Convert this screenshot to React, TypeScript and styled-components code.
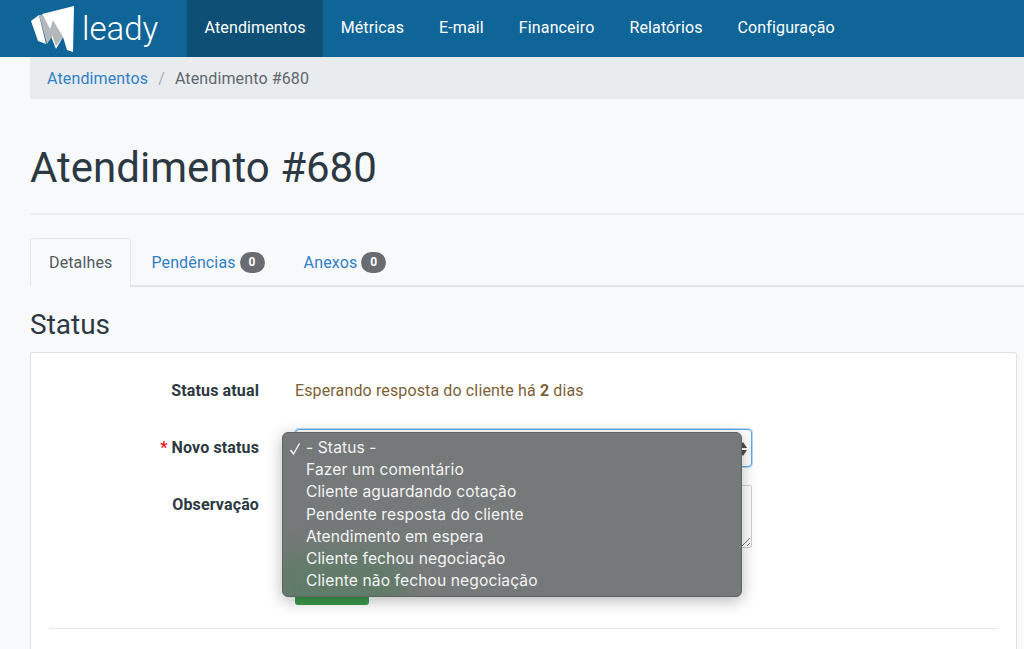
import React from 'react';
import styled, { createGlobalStyle } from 'styled-components';

const GlobalStyle = createGlobalStyle`
  html, body {
    margin: 0;
    padding: 0;
    height: 649px;
    overflow: hidden;
    background: #f8f9fb;
    font-family: Roboto, "Liberation Sans", sans-serif;
    font-size: 16px;
    letter-spacing: 0.13px;
    color: #2d3942;
  }
  * { box-sizing: border-box; }
`;

const NavBar = styled.nav`
  display: flex;
  align-items: stretch;
  height: 57px;
  padding-left: 30px;
  background: #0f6597;
`;

const Brand = styled.div`
  display: flex;
  align-items: center;
  width: 157px;
  gap: 6px;
  color: #fff;
  font-size: 33px;
  font-weight: 300;
  letter-spacing: 0;
`;

const NavItem = styled.a<{ $active?: boolean }>`
  display: flex;
  align-items: center;
  padding: 0 17.5px 2px;
  color: #fff;
  font-size: 16px;
  background: ${(p) => (p.$active ? '#0d4f75' : 'transparent')};
`;

const Content = styled.main`
  padding-left: 30px;
`;

const Breadcrumb = styled.div`
  display: flex;
  align-items: center;
  height: 42px;
  padding: 1px 0 0 17px;
  background: #e9ecef;
  color: #5f666c;
`;

const Crumb = styled.a`
  color: #3080c5;
`;

const Slash = styled.span`
  margin: 0 10px;
  color: #a6acb2;
`;

const Title = styled.h1`
  margin: 44px 0 0;
  height: 70px;
  font-size: 42px;
  line-height: 50px;
  font-weight: 400;
  letter-spacing: 0;
  color: #2d3942;
`;

const Rule = styled.hr`
  margin: 0;
  border: 0;
  border-top: 2px solid #eceef0;
`;

const Tabs = styled.div`
  display: flex;
  margin-top: 23px;
  height: 49px;
  border-bottom: 2px solid #e3e6e9;
`;

const Tab = styled.a<{ $active?: boolean }>`
  display: flex;
  align-items: center;
  gap: 4px;
  height: 49px;
  padding: 0 ${(p) => (p.$active ? '18px' : '19px')} 1px ${(p) => (p.$active ? '18px' : '20px')};
  color: ${(p) => (p.$active ? '#52595f' : '#3080c5')};
  border: ${(p) => (p.$active ? '1px solid #e3e6e9' : '0')};
  border-bottom: 0;
  border-radius: 3px 3px 0 0;
  background: ${(p) => (p.$active ? '#f8f9fb' : 'transparent')};
`;

const Badge = styled.span`
  display: inline-flex;
  align-items: center;
  justify-content: center;
  width: 25px;
  height: 21px;
  border-radius: 11px;
  background: #696c70;
  color: #fff;
  font-size: 12px;
  font-weight: 700;
`;

const SectionTitle = styled.h3`
  margin: 21px 0 10px;
  height: 34px;
  font-size: 28px;
  line-height: 34px;
  font-weight: 400;
  letter-spacing: 0;
  color: #2d3942;
`;

const Card = styled.section`
  position: relative;
  width: 987px;
  height: 297px;
  padding: 0 18px;
  background: #fff;
  border: 1px solid #dfe2e5;
  border-bottom: 0;
  border-radius: 3px 3px 0 0;
`;

const Row = styled.div<{ $height: number }>`
  display: grid;
  grid-template-columns: 210px 457px;
  column-gap: 36px;
  height: ${(p) => p.$height}px;
`;

const Label = styled.label<{ $top: number }>`
  padding-top: ${(p) => p.$top}px;
  text-align: right;
  font-weight: 700;
  line-height: 20px;
  color: #2d3942;
`;

const Required = styled.span`
  color: #e8141c;
  margin-right: 4px;
`;

const StatusText = styled.div`
  padding-top: 28px;
  line-height: 20px;
  color: #7c5f35;
`;

const SelectBox = styled.div`
  position: relative;
  height: 38px;
  background: #fff;
  border: 1px solid #5da9e6;
  border-radius: 4px;
  box-shadow: 0 0 0 1px #b9d9f3;
`;

const Arrows = styled.svg`
  position: absolute;
  right: 3px;
  top: 11px;
`;

const TextArea = styled.div`
  position: relative;
  height: 63px;
  background: #fff;
  border: 1px solid #ced2d6;
  border-radius: 2px;
`;

const Grip = styled.svg`
  position: absolute;
  right: 0;
  bottom: 0;
`;

const SaveButton = styled.div`
  width: 74px;
  height: 38px;
  background: #3c9a4c;
  border-radius: 3px;
`;

const CardRule = styled.hr`
  margin: 23px 0 0;
  border: 0;
  border-top: 1px solid #e6e8ea;
`;

const Menu = styled.ul`
  position: absolute;
  left: 251px;
  top: 79px;
  width: 460px;
  height: 165px;
  margin: 0;
  padding: 4px 0;
  list-style: none;
  overflow: hidden;
  border-radius: 6px;
  border: 1px solid #5f6363;
  background: #767979;
  box-shadow: 0 4px 16px rgba(0, 0, 0, 0.28);

  /* the green save button showing through the blurred menu */
  &::before {
    content: '';
    position: absolute;
    left: -10px;
    bottom: -26px;
    width: 130px;
    height: 70px;
    background: rgba(50, 130, 66, 0.3);
    filter: blur(14px);
  }
`;

const MenuItem = styled.li`
  position: relative;
  height: 22.2px;
  padding-left: 23px;
  line-height: 22px;
  font-family: Inter, Roboto, sans-serif;
  font-size: 15.6px;
  letter-spacing: 0.1px;
  color: #f3f4f4;
`;

const Check = styled.svg`
  position: absolute;
  left: 6px;
  top: 5px;
`;

const options = [
  '- Status -',
  'Fazer um comentário',
  'Cliente aguardando cotação',
  'Pendente resposta do cliente',
  'Atendimento em espera',
  'Cliente fechou negociação',
  'Cliente não fechou negociação',
];

function Logo() {
  return (
    <svg width="46" height="48" viewBox="0 0 46 48">
      <path d="M1 16 L9 10 L16 39 L8 36 Z" fill="#fff" />
      <path d="M12 9 L44 1 L43 47 L37 45 L33 32 L26 44 Z" fill="#fff" />
      <path d="M9 10 L13 10 L23 30 L17 39 Z" fill="#b4b8ba" />
      <path d="M23 15 L33 32 L26 41 L20 24 Z" fill="#b4b8ba" />
    </svg>
  );
}

export default function App() {
  return (
    <>
      <GlobalStyle />
      <NavBar>
        <Brand>
          <Logo />
          leady
        </Brand>
        <NavItem $active>Atendimentos</NavItem>
        <NavItem>Métricas</NavItem>
        <NavItem>E-mail</NavItem>
        <NavItem>Financeiro</NavItem>
        <NavItem>Relatórios</NavItem>
        <NavItem>Configuração</NavItem>
      </NavBar>
      <Content>
        <Breadcrumb>
          <Crumb>Atendimentos</Crumb>
          <Slash>/</Slash>
          Atendimento #680
        </Breadcrumb>
        <Title>Atendimento #680</Title>
        <Rule />
        <Tabs>
          <Tab $active>Detalhes</Tab>
          <Tab>
            Pendências <Badge>0</Badge>
          </Tab>
          <Tab>
            Anexos <Badge>0</Badge>
          </Tab>
        </Tabs>
        <SectionTitle>Status</SectionTitle>
        <Card>
          <Row $height={76}>
            <Label $top={28}>Status atual</Label>
            <StatusText>
              Esperando resposta do cliente há <b>2</b> dias
            </StatusText>
          </Row>
          <Row $height={56}>
            <Label $top={9}>
              <Required>*</Required>Novo status
            </Label>
            <SelectBox>
              <Arrows width="10" height="16" viewBox="0 0 10 16">
                <path d="M5 1 L9 7 H1 Z M5 15 L1 9 H9 Z" fill="#4a4d50" />
              </Arrows>
            </SelectBox>
          </Row>
          <Row $height={82}>
            <Label $top={10}>Observação</Label>
            <TextArea>
              <Grip width="12" height="12" viewBox="0 0 12 12">
                <path d="M3 11 L11 3 M8 11 L11 8" stroke="#777" strokeWidth="1" />
              </Grip>
            </TextArea>
          </Row>
          <Row $height={38}>
            <span />
            <SaveButton />
          </Row>
          <CardRule />
          <Menu>
            {options.map((o, i) => (
              <MenuItem key={o}>
                {i === 0 && (
                  <Check width="12" height="14" viewBox="0 0 12 14">
                    <path d="M1.5 8 L4.5 12 L10.5 1.5" fill="none" stroke="#f3f4f4" strokeWidth="1.5" />
                  </Check>
                )}
                {o}
              </MenuItem>
            ))}
          </Menu>
        </Card>
      </Content>
    </>
  );
}
